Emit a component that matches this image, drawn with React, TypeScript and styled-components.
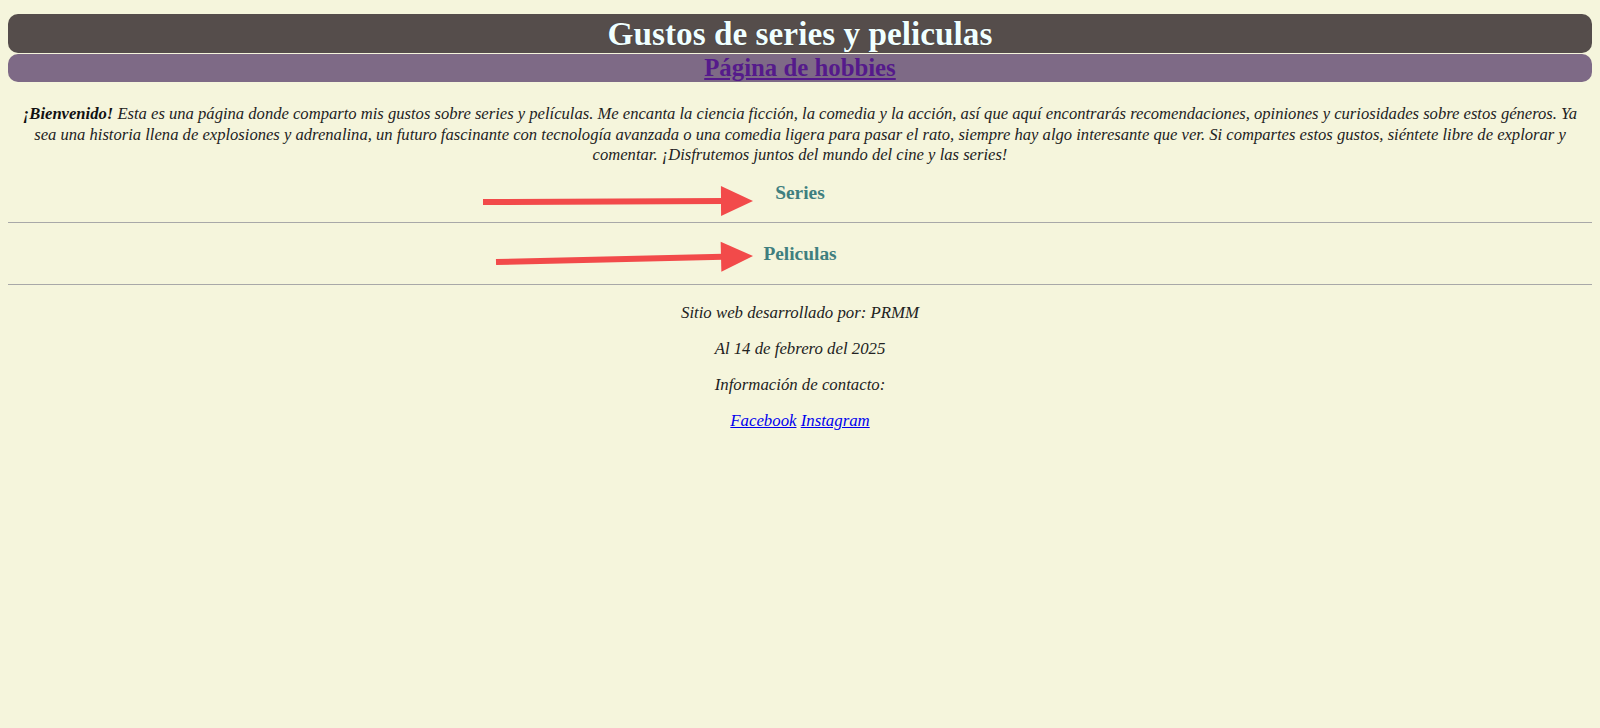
import { ReactElement } from "react";
import styled, { createGlobalStyle } from "styled-components";

const GlobalStyle = createGlobalStyle`
  html, body {
    margin: 0;
    padding: 0;
    background: #f5f5dc;
  }
  body {
    font-family: "Liberation Serif", "Times New Roman", serif;
    color: #1a1a1a;
  }
`;

const Page = styled.div`
  position: relative;
  min-height: 728px;
  padding: 14px 8px 8px;
  box-sizing: border-box;
`;

const TitleBar = styled.header`
  background: #554d4b;
  border-radius: 10px;
  height: 39px;
  display: flex;
  align-items: center;
  justify-content: center;
`;

const Title = styled.h1`
  margin: 0;
  font-size: 33.3px;
  font-weight: 700;
  color: #f0ffff;
  text-shadow: 0 0 1px rgba(0, 0, 0, 0.4);
`;

const NavBar = styled.nav`
  background: #7e6a86;
  border-radius: 10px;
  height: 28px;
  margin-top: 1px;
  display: flex;
  align-items: center;
  justify-content: center;
`;

const NavLink = styled.a`
  font-size: 24.8px;
  font-weight: 700;
  color: #551a8b;
  text-decoration: underline;
`;

const Intro = styled.p`
  margin: 22px 0 0;
  padding: 0 10px;
  font-size: 16.6px;
  line-height: 20.5px;
  font-style: italic;
  text-align: center;
  color: #222;

  strong {
    color: #111;
  }
`;

const Section = styled.section<{ $height: number; $offset: number }>`
  border-bottom: 1px solid #a8a8a8;
  height: ${(p) => p.$height}px;
  box-sizing: border-box;
  padding-top: ${(p) => Math.max(p.$offset, 0)}px;
  padding-bottom: ${(p) => Math.max(-p.$offset, 0)}px;
  display: flex;
  align-items: center;
  justify-content: center;
`;

const SectionTitle = styled.h3`
  margin: 0;
  font-size: 19.4px;
  font-weight: 700;
  color: #3f7f7f;
`;

const Footer = styled.footer`
  display: flex;
  flex-direction: column;
  align-items: center;
  gap: 17.6px;
  padding-top: 19px;
  font-style: italic;
  font-size: 16.8px;
`;

const FooterLine = styled.p`
  margin: 0;
  line-height: 18.4px;
  color: #222;
`;

const SocialLink = styled.a`
  color: #0000ee;
  text-decoration: underline;
`;

const Overlay = styled.svg`
  position: absolute;
  left: 0;
  top: 0;
  pointer-events: none;
`;

const Arrow = ({ x1, y1, x2, y2 }: { x1: number; y1: number; x2: number; y2: number }) => {
  const angle = Math.atan2(y2 - y1, x2 - x1);
  const len = 32;
  const half = 15;
  const bx = x2 - Math.cos(angle) * len;
  const by = y2 - Math.sin(angle) * len;
  const nx = -Math.sin(angle) * half;
  const ny = Math.cos(angle) * half;
  return (
    <g fill="#f24a4a" stroke="none">
      <line x1={x1} y1={y1} x2={bx + 2} y2={by} stroke="#f24a4a" strokeWidth={6} />
      <polygon points={`${x2},${y2} ${bx + nx},${by + ny} ${bx - nx},${by - ny}`} />
    </g>
  );
};

export default function App(): ReactElement {
  return (
    <>
      <GlobalStyle />
      <Page>
        <TitleBar>
          <Title>Gustos de series y peliculas</Title>
        </TitleBar>
        <NavBar>
          <NavLink href="#">Página de hobbies</NavLink>
        </NavBar>
        <Intro>
          <strong>¡Bienvenido!</strong> Esta es una página donde comparto mis gustos sobre series y
          películas. Me encanta la ciencia ficción, la comedia y la acción, así que aquí encontrarás
          recomendaciones, opiniones y curiosidades sobre estos géneros. Ya sea una historia llena de
          explosiones y adrenalina, un futuro fascinante con tecnología avanzada o una comedia ligera
          para pasar el rato, siempre hay algo interesante que ver. Si compartes estos gustos, siéntete
          libre de explorar y comentar. ¡Disfrutemos juntos del mundo del cine y las series!
        </Intro>
        <div>
          <Section $height={57} $offset={-2}>
            <SectionTitle>Series</SectionTitle>
          </Section>
          <Section $height={62} $offset={2}>
            <SectionTitle>Peliculas</SectionTitle>
          </Section>
        </div>
        <Footer>
          <FooterLine>Sitio web desarrollado por: PRMM</FooterLine>
          <FooterLine>Al 14 de febrero del 2025</FooterLine>
          <FooterLine>Información de contacto:</FooterLine>
          <FooterLine>
            <SocialLink href="#">Facebook</SocialLink> <SocialLink href="#">Instagram</SocialLink>
          </FooterLine>
        </Footer>
        <Overlay width={1600} height={728}>
          <Arrow x1={483} y1={202} x2={753} y2={201} />
          <Arrow x1={496} y1={262} x2={753} y2={256} />
        </Overlay>
      </Page>
    </>
  );
}
